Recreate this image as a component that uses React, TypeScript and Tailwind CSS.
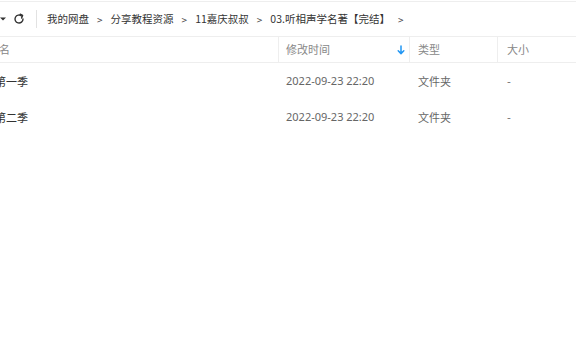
const font = { fontFamily: '"Noto Sans CJK SC", "Noto Sans", sans-serif' };

const crumbs = ["我的网盘", "分享教程资源", "11嘉庆叔叔", "03.听相声学名著【完结】"];

const rows = [
  { name: "第一季", time: "2022-09-23 22:20", type: "文件夹", size: "-" },
  { name: "第二季", time: "2022-09-23 22:20", type: "文件夹", size: "-" },
];

export default function App() {
  return (
    <div className="h-[356px] w-[576px] overflow-hidden bg-white text-[11px]" style={font}>
      <div className="mt-px flex h-[36px] items-center border-y border-[#eeeeee] text-[#333]">
        <svg width="8" height="6" viewBox="0 0 8 6" className="-ml-[1px]">
          <path d="M1 1.5 L4 4.5 L7 1.5 Z" fill="#333" />
        </svg>
        <svg width="12" height="12" viewBox="0 0 12 12" className="ml-[6px]" fill="none" stroke="#333" strokeWidth="1.4">
          <path d="M10 6 A4 4 0 1 1 8.6 3" strokeLinecap="round" />
          <path d="M7.2 1.2 L9.6 2.4 L8.6 5" strokeLinecap="round" strokeLinejoin="round" />
        </svg>
        <div className="ml-[11px] h-[18px] w-px bg-[#e2e2e2]" />
        <div className="ml-[10px] flex items-center text-[10.5px]">
          {crumbs.map((c) => (
            <div key={c} className="flex items-center">
              <span>{c}</span>
              <span className="mx-[8px] text-[10px] text-[#444]">&gt;</span>
            </div>
          ))}
        </div>
      </div>
      <div className="flex h-[26px] items-center border-b border-[#eeeeee] text-[#888]">
        <div className="flex h-full w-[279px] items-center overflow-hidden border-r border-[#eeeeee]">
          <span className="-ml-[23px] whitespace-nowrap">文件名</span>
        </div>
        <div className="flex h-full w-[131px] items-center justify-between border-r border-[#eeeeee] pl-[7px] pr-[4px]">
          <span>修改时间</span>
          <svg width="8" height="10" viewBox="0 0 8 10" fill="none" stroke="#2196f3" strokeWidth="1.5">
            <path d="M4 1 V8.5 M1.2 5.8 L4 8.6 L6.8 5.8" strokeLinecap="round" strokeLinejoin="round" />
          </svg>
        </div>
        <div className="flex h-full w-[88px] items-center border-r border-[#eeeeee] pl-[8px]">
          <span>类型</span>
        </div>
        <div className="flex h-full flex-1 items-center pl-[9px]">
          <span>大小</span>
        </div>
      </div>
      {rows.map((r) => (
        <div key={r.name} className="flex h-[36px] items-center">
          <div className="w-[279px] overflow-hidden">
            <span className="-ml-[5px] block whitespace-nowrap text-[#333]">{r.name}</span>
          </div>
          <div className="w-[131px] pl-[7px] text-[#666]" style={{ fontFamily: '"Noto Sans", sans-serif' }}>
            {r.time}
          </div>
          <div className="w-[88px] pl-[8px] text-[#666]">{r.type}</div>
          <div className="flex-1 pl-[9px] text-[#666]">{r.size}</div>
        </div>
      ))}
    </div>
  );
}
